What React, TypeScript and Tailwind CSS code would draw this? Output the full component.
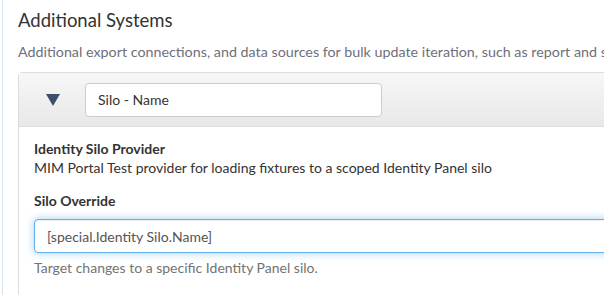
export default function App() {
  const font = { fontFamily: 'Lato, "Noto Sans", sans-serif' };
  return (
    <div className="h-[295px] w-[604px] overflow-hidden bg-white text-[#333]" style={font}>
      <div className="ml-[2px] h-full border-l border-[#d6e2ee] pl-[15px]">
        <h2 className="pt-[8px] text-[18.5px] leading-[24px] font-normal text-[#333]">Additional Systems</h2>
        <p className="mt-[11px] whitespace-nowrap text-[14.3px] leading-[18px] text-[#6f6f7a]">
          Additional export connections, and data sources for bulk update iteration, such as report and spreadsheet data.
        </p>
        <div className="mt-[11px] w-[700px] rounded-tl-[4px] border border-[#ddd]">
          <div className="flex h-[54px] items-center border-b border-[#ddd] bg-gradient-to-b from-[#f7f7f7] to-[#e8e8e8]">
            <svg className="ml-[27px]" width="14" height="12" viewBox="0 0 14 12">
              <polygon points="0,0 14,0 7,12" fill="#3d4f6b" />
            </svg>
            <input
              readOnly
              value="Silo - Name"
              className="ml-[25px] h-[34px] w-[297px] rounded-[4px] border border-[#ccc] bg-white px-[12px] text-[14px] text-[#333] outline-none"
              style={font}
            />
          </div>
          <div className="px-[15px] pt-[13px] pb-[20px]">
            <div className="text-[14px] leading-[18px] font-bold text-[#333]">Identity Silo Provider</div>
            <div className="text-[14px] leading-[20px] text-[#333]">
              MIM Portal Test provider for loading fixtures to a scoped Identity Panel silo
            </div>
            <div className="mt-[14px] text-[14px] leading-[18px] font-bold text-[#333]">Silo Override</div>
            <input
              readOnly
              value="[special.Identity Silo.Name]"
              className="mt-[9px] h-[34px] w-full rounded-[4px] border border-[#66afe9] bg-white px-[12px] text-[14px] text-[#555] shadow-[inset_0_1px_1px_rgba(0,0,0,0.075),0_0_8px_rgba(102,175,233,0.6)] outline-none"
              style={font}
            />
            <div className="mt-[6px] text-[14px] leading-[18px] text-[#737373]">
              Target changes to a specific Identity Panel silo.
            </div>
          </div>
        </div>
      </div>
    </div>
  );
}
